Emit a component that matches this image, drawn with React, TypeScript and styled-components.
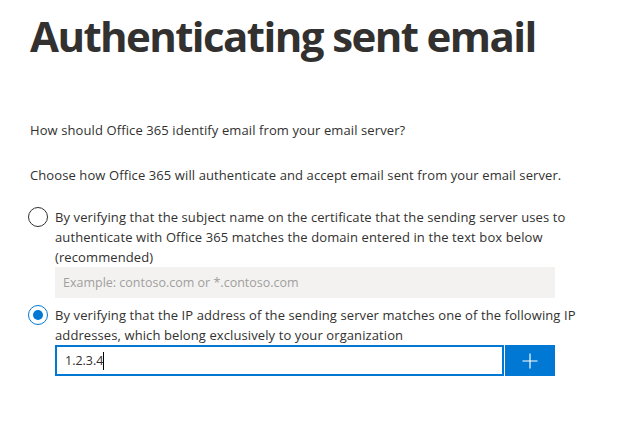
import styled, { createGlobalStyle } from "styled-components";

const GlobalStyle = createGlobalStyle`
  html, body {
    margin: 0;
    padding: 0;
    background: #ffffff;
  }
  body {
    font-family: "Open Sans", "Noto Sans", sans-serif;
    color: #323130;
  }
`;

const Page = styled.div`
  width: 625px;
  height: 423px;
  padding: 6px 0 0 30px;
  box-sizing: border-box;
`;

const Title = styled.h1`
  margin: 0;
  font-family: "Open Sans", sans-serif;
  font-size: 42px;
  font-weight: 700;
  line-height: 60px;
  letter-spacing: -1.6px;
  color: #323130;
`;

const Text = styled.p`
  margin: 0;
  font-size: 13px;
  line-height: 20px;
  letter-spacing: 0.1px;
  color: #323130;
`;

const Question = styled(Text)`
  margin-top: 54px;
`;

const Hint = styled(Text)`
  margin-top: 25px;
`;

const Options = styled.div`
  display: flex;
  flex-direction: column;
  gap: 7px;
  margin-top: 22px;
`;

const Option = styled.div`
  display: grid;
  grid-template-columns: 25px 530px;
`;

const Radio = styled.span<{ checked?: boolean }>`
  width: 20px;
  height: 20px;
  margin-left: -2px;
  box-sizing: border-box;
  border-radius: 50%;
  border: 1px solid ${(p) => (p.checked ? "#0078d4" : "#323130")};
  display: flex;
  align-items: center;
  justify-content: center;
  &::after {
    content: "";
    display: ${(p) => (p.checked ? "block" : "none")};
    width: 10px;
    height: 10px;
    border-radius: 50%;
    background: #0078d4;
  }
`;

const Label = styled(Text)``;

const Field = styled.div`
  grid-column: 2;
  width: 500px;
  display: flex;
  height: 31px;
`;

const Input = styled.div<{ disabled?: boolean }>`
  flex: 1;
  box-sizing: border-box;
  display: flex;
  align-items: center;
  padding: 0 8px;
  font-size: 12.5px;
  background: ${(p) => (p.disabled ? "#f3f2f1" : "#ffffff")};
  color: ${(p) => (p.disabled ? "#a19f9d" : "#323130")};
  border: ${(p) => (p.disabled ? "none" : "2px solid #0078d4")};
`;

const Caret = styled.span`
  display: inline-block;
  width: 1px;
  height: 18px;
  background: #000;
`;

const AddButton = styled.button`
  width: 50px;
  border: none;
  background: #0078d4;
  margin-left: 1px;
  display: flex;
  align-items: center;
  justify-content: center;
  padding: 0;
`;

export default function App() {
  return (
    <Page>
      <GlobalStyle />
      <Title>Authenticating sent email</Title>
      <Question>How should Office 365 identify email from your email server?</Question>
      <Hint>Choose how Office 365 will authenticate and accept email sent from your email server.</Hint>
      <Options>
        <Option>
          <Radio />
          <Label>
            By verifying that the subject name on the certificate that the sending server uses to
            authenticate with Office 365 matches the domain entered in the text box below
            (recommended)
          </Label>
          <Field>
            <Input disabled>Example: contoso.com or *.contoso.com</Input>
          </Field>
        </Option>
        <Option>
          <Radio checked />
          <Label>
            By verifying that the IP address of the sending server matches one of the following IP
            addresses, which belong exclusively to your organization
          </Label>
          <Field>
            <Input>
              1.2.3.4
              <Caret />
            </Input>
            <AddButton aria-label="Add">
              <svg width="16" height="16" viewBox="0 0 16 16">
                <path d="M8 0.5v15M0.5 8h15" stroke="#ffffff" strokeWidth="1.2" fill="none" />
              </svg>
            </AddButton>
          </Field>
        </Option>
      </Options>
    </Page>
  );
}
